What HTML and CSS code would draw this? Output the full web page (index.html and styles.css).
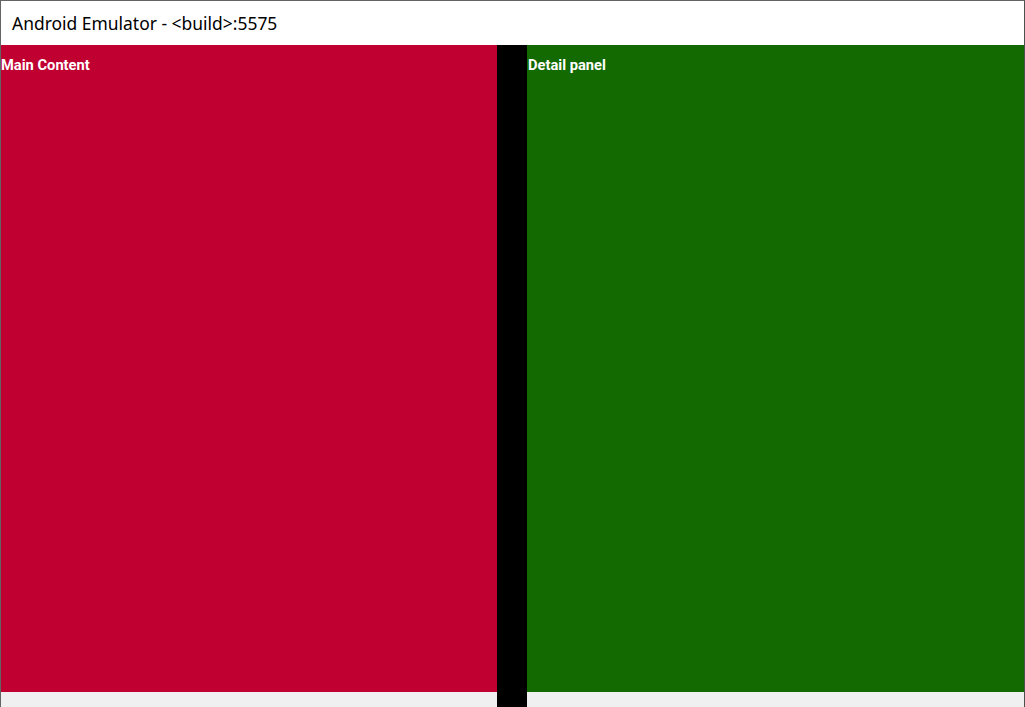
FILE: index.html
```html
<!DOCTYPE html>
<html>
<head>
<meta charset="utf-8">
<link rel="stylesheet" href="styles.css">
</head>
<body>
<div class="window">
  <div class="titlebar"><span class="title">Android Emulator - &lt;build&gt;:5575</span></div>
  <div class="content">
    <div class="col main">
      <div class="pane red"><span class="label">Main Content</span></div>
      <div class="navbar"></div>
    </div>
    <div class="divider"></div>
    <div class="col detail">
      <div class="pane green"><span class="label">Detail panel</span></div>
      <div class="navbar"></div>
    </div>
  </div>
</div>
</body>
</html>
```
FILE: styles.css
```css
html, body {
  margin: 0;
  padding: 0;
  background: #ffffff;
}
.window {
  width: 1023px;
  height: 706px;
  border-top: 1px solid #646464;
  border-left: 1px solid #646464;
  border-right: 1px solid #505050;
  display: flex;
  flex-direction: column;
  overflow: hidden;
}
.titlebar {
  height: 44px;
  background: #ffffff;
  display: flex;
  align-items: center;
  padding-left: 11px;
}
.title {
  font-family: "Noto Sans", "Open Sans", sans-serif;
  font-size: 17.45px;
  color: #000000;
}
.content {
  flex: 1;
  display: grid;
  grid-template-columns: 496px 30px 497px;
}
.col {
  display: flex;
  flex-direction: column;
}
.pane {
  height: 647px;
  box-sizing: border-box;
  padding-top: 11px;
}
.red { background: #c10032; }
.green { background: #136a00; }
.label {
  font-family: Roboto, "Noto Sans", sans-serif;
  font-weight: 700;
  font-size: 14.7px;
  color: #ffffff;
}
.detail .label { padding-left: 1px; }
.navbar {
  flex: 1;
  background: #f0f0f0;
}
.divider {
  background: #000000;
}
```
